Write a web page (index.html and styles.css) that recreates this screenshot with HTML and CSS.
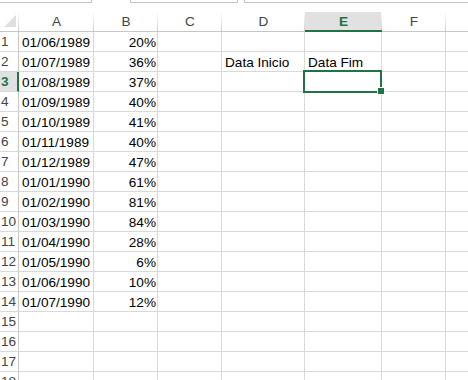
FILE: index.html
```html
<!DOCTYPE html>
<html lang="pt">
<head>
  <meta charset="UTF-8" />
  <title>Planilha</title>
  <link rel="stylesheet" href="styles.css">
</head>
<body>
  <div class="toolbar">
    <div class="box box-name"></div>
    <div class="box box-mid"></div>
    <div class="box box-formula"></div>
  </div>
  <div class="sheet" id="sheet"></div>

  <script>
    const cols = ["A", "B", "C", "D", "E", "F", ""];
    const data = [
      ["01/06/1989", "20%"], ["01/07/1989", "36%"], ["01/08/1989", "37%"],
      ["01/09/1989", "40%"], ["01/10/1989", "41%"], ["01/11/1989", "40%"],
      ["01/12/1989", "47%"], ["01/01/1990", "61%"], ["01/02/1990", "81%"],
      ["01/03/1990", "84%"], ["01/04/1990", "28%"], ["01/05/1990", "6%"],
      ["01/06/1990", "10%"], ["01/07/1990", "12%"]
    ];
    const sheet = document.getElementById("sheet");

    function cell(cls, text) {
      const div = document.createElement("div");
      div.className = cls;
      if (text) div.textContent = text;
      sheet.appendChild(div);
      return div;
    }

    // cabeçalho das colunas
    cell("corner");
    cols.forEach(c => cell(c === "E" ? "colhead active" : "colhead", c));

    for (let r = 1; r <= 18; r++) {
      cell(r === 3 ? "rowhead active" : "rowhead", String(r));
      const row = data[r - 1] || ["", ""];
      cols.forEach(c => {
        let text = "";
        let cls = "cell";
        if (c === "A") text = row[0];
        if (c === "B") { text = row[1]; cls += " num"; }
        if (r === 2 && c === "D") text = "Data Inicio";
        if (r === 2 && c === "E") text = "Data Fim";
        if (r === 3 && c === "E") cls += " selected";
        cell(cls, text);
      });
    }
  </script>
</body>
</html>
```

FILE: styles.css
```css
:root {
  --grid: #d9d9d9;
  --head-line: #c6c6c6;
  --green: #217346;
}
* { box-sizing: border-box; }
body {
  margin: 0;
  background: #fff;
  font-family: "Liberation Sans", Arial, sans-serif;
  font-size: 13.6px;
  color: #000;
  overflow: hidden;
}
.toolbar {
  height: 12px;
  display: flex;
}
.box {
  height: 3px;
  border: 1px solid #c6c6c6;
  border-top: none;
}
.box-name { width: 92px; border-left: none; }
.box-mid { width: 108px; margin-left: 38px; }
.box-formula { flex: 1; margin-left: 6px; border-right: none; }

.sheet {
  display: grid;
  grid-template-columns: 19px 75px 64px 64px 83px 77px 64px 64px;
  grid-auto-rows: 20px;
}
.corner, .colhead {
  border-bottom: 1px solid var(--head-line);
  background: linear-gradient(#fff, #d0d0d0) right / 1px 100% no-repeat;
}
.corner { position: relative; }
.corner::after {
  content: "";
  position: absolute;
  right: 3px;
  bottom: 4px;
  border-style: solid;
  border-width: 0 0 12px 12px;
  border-color: transparent transparent #dfdfdf transparent;
}
.colhead {
  text-align: center;
  line-height: 19px;
  color: #444;
}
.colhead.active {
  background-color: #e1e1e1;
  border-bottom: 2px solid var(--green);
  color: var(--green);
  font-weight: bold;
}
.rowhead {
  border-right: 1px solid var(--head-line);
  border-bottom: 1px solid var(--grid);
  padding-left: 1px;
  line-height: 19px;
  color: #444;
}
.rowhead.active {
  background: #e1e1e1;
  border-right: 2px solid var(--green);
  color: var(--green);
  font-weight: bold;
}
.cell {
  border-right: 1px solid var(--grid);
  border-bottom: 1px solid var(--grid);
  padding: 1px 2px 0 3px;
  line-height: 19px;
  white-space: nowrap;
  overflow: visible;
}
.cell.num { text-align: right; padding-right: 1px; }
.cell.selected { position: relative; }
.cell.selected::before {
  content: "";
  position: absolute;
  left: -2px;
  top: -2px;
  right: -1px;
  bottom: -2px;
  border: 2px solid var(--green);
}
.cell.selected::after {
  content: "";
  position: absolute;
  right: -4px;
  bottom: -4px;
  width: 6px;
  height: 6px;
  background: var(--green);
  border: 1px solid #fff;
}
```
